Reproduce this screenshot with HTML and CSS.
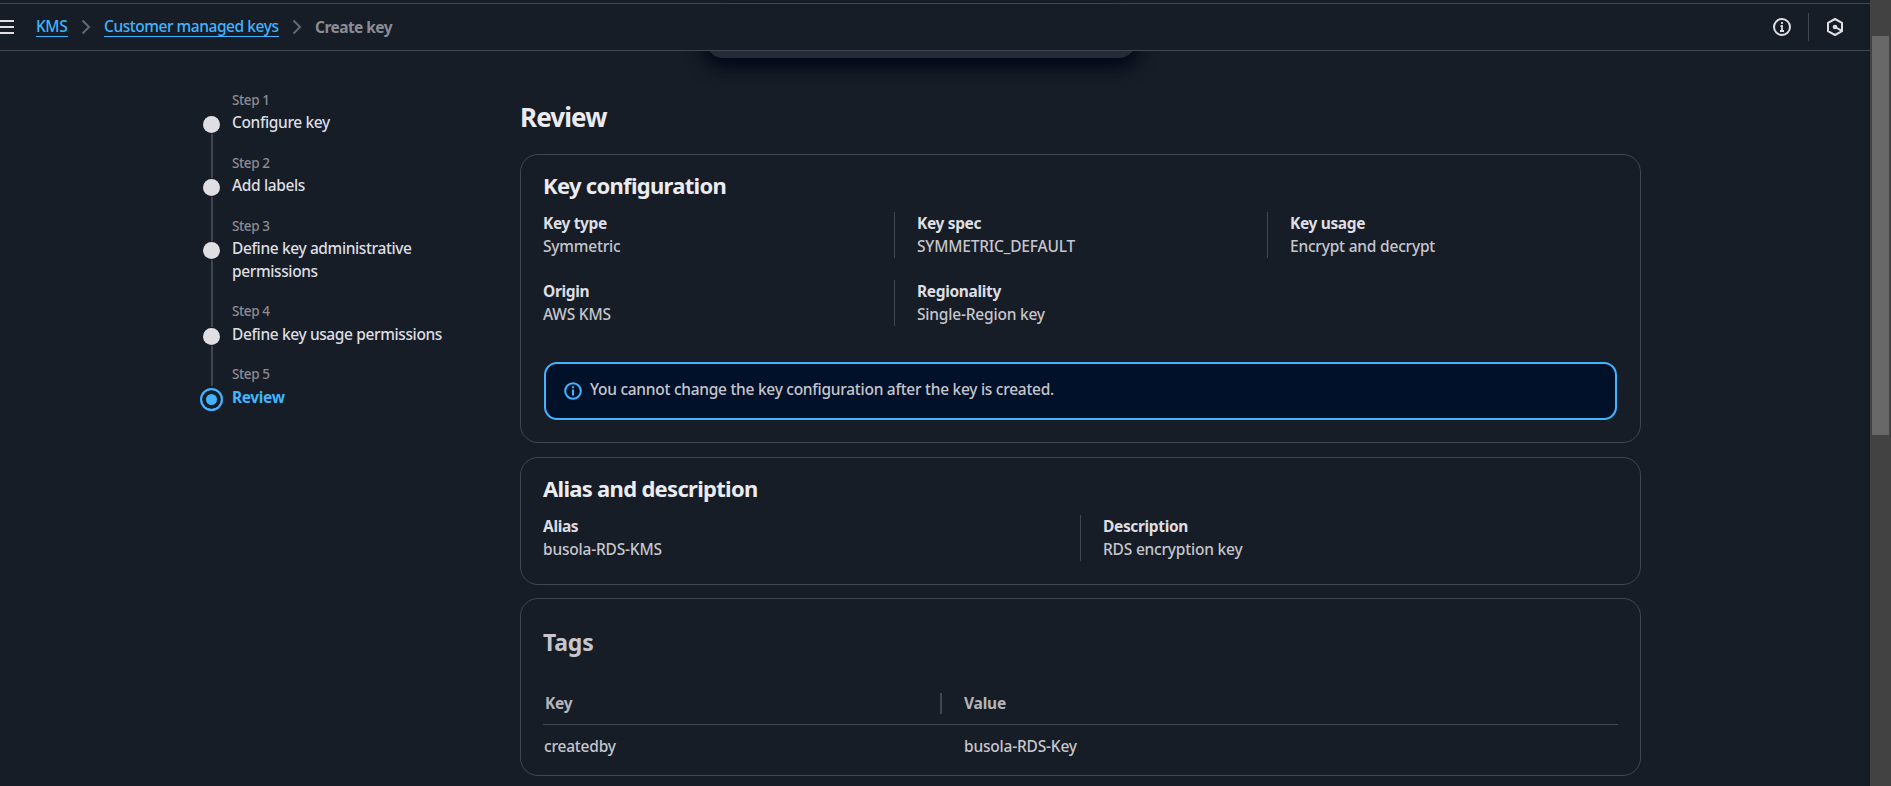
FILE: index.html
```
<!DOCTYPE html>
<html lang="en">
<head>
<meta charset="utf-8">
<title>Create key</title>
<link rel="stylesheet" href="styles.css">
</head>
<body>
<div class="page">
  <header class="topbar">
    <svg class="menu" width="14" height="14" viewBox="0 0 14 14"><path d="M0 1h14M0 7h14M0 13h14" stroke="#dedee3" stroke-width="2"/></svg>
    <nav class="crumbs">
      <a class="link kms">KMS</a>
      <svg class="chev" width="10" height="16" viewBox="0 0 10 16"><path d="M1.500 1.500 8 8l-6.500 6.500" fill="none" stroke="#656871" stroke-width="2"/></svg>
      <a class="link cmk">Customer managed keys</a>
      <svg class="chev" width="10" height="16" viewBox="0 0 10 16"><path d="M1.500 1.500 8 8l-6.500 6.500" fill="none" stroke="#656871" stroke-width="2"/></svg>
      <span class="current">Create key</span>
    </nav>
    <div class="tools">
      <svg width="18" height="18" viewBox="0 0 18 18"><circle cx="9" cy="9" r="8" fill="none" stroke="#dedee3" stroke-width="2"/><path d="M9 4v2M7.500 8H9v5M7 13h4" fill="none" stroke="#dedee3" stroke-width="1.800"/></svg>
      <i class="sep"></i>
      <svg width="18" height="18" viewBox="0 0 18 18"><path d="M9 1l7 3.800v8.400L9 17l-7-3.800V4.800z" fill="none" stroke="#dedee3" stroke-width="2" stroke-linejoin="round"/><circle cx="9" cy="9" r="2.300" fill="#dedee3"/><path d="M9 9l6.500 3.700" stroke="#dedee3" stroke-width="2"/></svg>
    </div>
  </header>
  <div class="flash"></div>
  <main class="main">
    <ol class="steps">
      <li class="step"><i class="dot"></i><small>Step 1</small><span>Configure key</span></li>
      <li class="step"><i class="dot"></i><small>Step 2</small><span>Add labels</span></li>
      <li class="step"><i class="dot"></i><small>Step 3</small><span>Define key administrative<br>permissions</span></li>
      <li class="step"><i class="dot"></i><small>Step 4</small><span>Define key usage permissions</span></li>
      <li class="step active"><i class="dot"></i><small>Step 5</small><span>Review</span></li>
    </ol>
    <div class="content">
      <h1>Review</h1>
      <section class="card config">
        <h2>Key configuration</h2>
        <div class="grid three">
          <dl><dt>Key type</dt><dd>Symmetric</dd></dl>
          <dl><dt>Key spec</dt><dd>SYMMETRIC_DEFAULT</dd></dl>
          <dl><dt>Key usage</dt><dd>Encrypt and decrypt</dd></dl>
          <dl><dt>Origin</dt><dd>AWS KMS</dd></dl>
          <dl><dt>Regionality</dt><dd>Single-Region key</dd></dl>
        </div>
        <div class="alert">
          <svg width="18" height="18" viewBox="0 0 18 18"><circle cx="9" cy="9" r="7.800" fill="none" stroke="#42b4ff" stroke-width="2"/><path d="M9 4.200v2M9 7.500V13.500" fill="none" stroke="#42b4ff" stroke-width="2"/></svg>
          <span>You cannot change the key configuration after the key is created.</span>
        </div>
      </section>
      <section class="card alias">
        <h2>Alias and description</h2>
        <div class="grid two">
          <dl><dt>Alias</dt><dd>busola-RDS-KMS</dd></dl>
          <dl><dt>Description</dt><dd>RDS encryption key</dd></dl>
        </div>
      </section>
      <section class="card tags">
        <h2 class="h-tags">Tags</h2>
        <div class="row head"><span class="key">Key</span><i></i><span>Value</span></div>
        <div class="row"><span class="created">createdby</span><i></i><span>busola-RDS-Key</span></div>
      </section>
    </div>
  </main>
</div>
<div class="scrollbar"><div class="thumb"></div></div>
</body>
</html>
```
FILE: styles.css
```
* { box-sizing: border-box; }
body { margin: 0; display: flex; height: 786px; overflow: hidden; background: #161d26; color: #c6c6cd; font: 500 15.5px/22.6px "Noto Sans", "Open Sans", sans-serif; white-space: nowrap; }
.page { position: relative; width: 1870px; height: 786px; padding-top: 3px; overflow: hidden; }
.scrollbar { width: 21px; height: 786px; background: #424242; padding: 36px 2px 0; }
.thumb { height: 399px; background: #686868; }
.topbar { position: relative; z-index: 1; display: flex; align-items: center; height: 48px; border: solid #424650; border-width: 1px 0; background: #161d26; }
.menu { margin-right: 22px; }
.crumbs { display: flex; align-items: center; flex: 1; }
.link { color: #42b4ff; height: 20px; line-height: 18px; border-bottom: 1px solid #42b4ff; letter-spacing: -.45px; }
.link.kms { width: 32px; }
.link.cmk { width: 175px; }
.chev { margin: 0 14px 0 13px; }
.link.kms + .chev { margin-right: 13px; }
.chev + .current { margin-left: -1px; }
.current { color: #8c8c94; font-weight: 700; letter-spacing: -.55px; line-height: 20px; padding-bottom: 1px; }
.tools { display: flex; align-items: center; margin-right: 26px; }
.sep { width: 1px; height: 28px; background: #424650; margin: 0 17px; }
.flash { position: absolute; left: 706px; top: 20px; width: 430px; height: 38px; border-radius: 17px; background: #232b37; box-shadow: 0 6px 18px 3px #000716; }
.main { display: flex; padding: 38px 229px 0 200px; }
.steps { list-style: none; margin: 0; padding: 0; width: 320px; }
.step { position: relative; padding-left: 32px; height: 63px; color: #dedee3; letter-spacing: -.38px; }
.step:nth-child(3) { height: 86px; }
.step small { display: block; font-size: 13.5px; line-height: 22px; color: #8c8c94; }
.step:nth-child(n+4) small { line-height: 21px; padding-bottom: 1px; }
.step span { display: block; line-height: 23px; }
.dot { position: absolute; left: 3px; top: 27px; width: 17px; height: 17px; border-radius: 50%; background: #dedee3; }
.step:not(.active)::after { content: ""; position: absolute; left: 11px; top: 45px; bottom: -26px; width: 2px; background: #424650; }
.step:nth-child(4)::after { bottom: -22px; }
.step.active span { color: #42b4ff; font-weight: 700; }
.active .dot { left: 0; top: 24px; width: 23px; height: 23px; border: 2px solid #42b4ff; background: #42b4ff; box-shadow: inset 0 0 0 4px #161d26; }
.content { width: 1121px; }
h1 { margin: 12px 0 21px; font-size: 26px; line-height: 32px; color: #ebebf0; letter-spacing: -.9px; }
.card { border: 1px solid #424650; border-radius: 18px; padding: 17px 22px 0; margin-bottom: 14px; }
h2 { margin: 0 0 14px; font-size: 22px; line-height: 26px; color: #ebebf0; letter-spacing: -.7px; }
.config { height: 289px; }
.alias { height: 128px; margin-bottom: 13px; }
.tags { height: 178px; margin: 0; }
.grid { display: grid; row-gap: 22px; }
.three { grid-template-columns: 351px 373px 1fr; }
.two { grid-template-columns: 537px 1fr; }
dl { margin: 0; height: 46px; letter-spacing: -.2px; }
.three dl:not(:nth-child(3n+1)), .two dl + dl { border-left: 1px solid #424650; padding-left: 22px; }
dt { font-weight: 700; color: #dedee3; letter-spacing: -.35px; }
dd { margin: 0; }
.alert { display: flex; align-items: center; gap: 8px; height: 58px; margin: 36px 1px 0; padding: 0 17px 3px 18px; border: 2px solid #42b4ff; border-radius: 13px; background: #001129; letter-spacing: -.27px; }
.alert svg { margin-top: 3px; }
h2.h-tags { margin: 13px 0 27px; color: #c6c6cd; font-size: 23px; letter-spacing: -.2px; }
.row { display: grid; grid-template-columns: 397px 24px 1fr; align-items: center; height: 43px; letter-spacing: -.2px; }
.head { border-bottom: 1px solid #424650; font-weight: 700; color: #b4b4bb; }
.head i { width: 2px; height: 21px; background: #424650; }
.key { padding-left: 2px; }
.created { padding-left: 1px; }
```
